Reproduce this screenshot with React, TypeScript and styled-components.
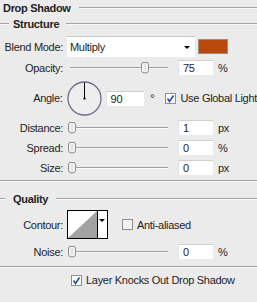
import * as React from 'react'
import styled, { createGlobalStyle } from 'styled-components'

const GlobalStyle = createGlobalStyle`
  html, body {
    margin: 0;
    padding: 0;
    background: #ebebeb;
  }
`

const Panel = styled.div`
  width: 257px;
  height: 302px;
  background: #ebebeb;
  font-family: 'Liberation Sans', Arial, sans-serif;
  font-size: 11px;
  letter-spacing: -0.3px;
  color: #1e1e1e;
  display: flex;
  flex-direction: column;
  overflow: hidden;
`

const HeaderRow = styled.div<{ $top?: number }>`
  display: flex;
  align-items: center;
  height: 16px;
  margin-top: ${p => p.$top || 0}px;
`

const Rule = styled.div<{ $w?: number; $gap?: number }>`
  height: 1px;
  background: #a3a3a3;
  border-bottom: 1px solid #f8f8f8;
  margin-left: ${p => p.$gap || 0}px;
  ${p => (p.$w ? `width: ${p.$w}px;` : 'flex: 1;')}
`

const Heading = styled.div<{ $left: number }>`
  font-weight: bold;
  margin-left: ${p => p.$left}px;
  white-space: nowrap;
`

const Separator = styled.div<{ $top: number }>`
  height: 1px;
  background: #a3a3a3;
  border-bottom: 1px solid #f8f8f8;
  margin-top: ${p => p.$top}px;
`

const Row = styled.div<{ $top: number; $h: number }>`
  display: flex;
  align-items: center;
  margin-top: ${p => p.$top}px;
  height: ${p => p.$h}px;
`

const Label = styled.div`
  width: 63px;
  text-align: right;
  white-space: nowrap;
`

const Select = styled.div`
  margin-left: 4px;
  width: 128px;
  height: 21px;
  box-sizing: border-box;
  background: #fff;
  border-top: 1px solid #c8c8c8;
  display: flex;
  align-items: center;
  padding-left: 3px;
  position: relative;
`

const Caret = styled.div<{ $right: number }>`
  position: absolute;
  right: ${p => p.$right}px;
  top: 50%;
  margin-top: -1px;
  width: 0;
  height: 0;
  border-left: 3px solid transparent;
  border-right: 3px solid transparent;
  border-top: 3px solid #000;
`

const Swatch = styled.div`
  margin-left: 3px;
  width: 30px;
  height: 15px;
  box-sizing: border-box;
  background: #b6490b;
  border: 1px solid #9a8d84;
`

const Track = styled.div`
  margin-left: 4px;
  width: 104px;
  height: 15px;
  position: relative;
  &::before {
    content: '';
    position: absolute;
    left: 3px;
    right: 3px;
    top: 7px;
    height: 1px;
    background: #a0a0a0;
    border-bottom: 1px solid #fafafa;
  }
`

const Thumb = styled.svg`
  position: absolute;
  top: 1px;
`

const Field = styled.div<{ $w?: number; $left?: number }>`
  margin-left: ${p => (p.$left === undefined ? 7 : p.$left)}px;
  width: ${p => p.$w || 35}px;
  height: 15px;
  box-sizing: border-box;
  background: #fff;
  border-top: 1px solid #d0d0d0;
  border-left: 1px solid #e2e2e2;
  padding-left: 4px;
  display: flex;
  align-items: center;
`

const Unit = styled.div<{ $left?: number }>`
  margin-left: ${p => p.$left || 5}px;
`

const Dial = styled.svg`
  margin-left: 4px;
  flex: none;
`

const Check = styled.svg<{ $left: number }>`
  margin-left: ${p => p.$left}px;
  flex: none;
`

const CheckText = styled.div`
  margin-left: 4px;
  white-space: nowrap;
`

const ContourBox = styled.div`
  margin-left: 4px;
  width: 41px;
  height: 29px;
  box-sizing: border-box;
  border: 1px solid #000;
  display: flex;
  background: #fff;
`

const ContourPreview = styled.svg`
  display: block;
  flex: none;
`

const ContourDrop = styled.div`
  flex: 1;
  border-left: 1px solid #000;
  position: relative;
`

const SliderThumb = ({ pos }: { pos: number }) => (
  <Thumb width="8" height="13" viewBox="0 0 8 13" style={{ left: pos }}>
    <path
      d="M2 1.5 H6 Q7.5 1.5 7.5 4 V9.5 Q7.5 12 4 12 Q0.5 12 0.5 9.5 V4 Q0.5 1.5 2 1.5 Z"
      fill="#f3f3f3"
      stroke="#8c8c8c"
    />
    <line x1="4" y1="3" x2="4" y2="10" stroke="#d2d2d2" />
  </Thumb>
)

const Checkbox = ({ left }: { left: number }) => (
  <Check $left={left} width="11" height="11" viewBox="0 0 11 11">
    <rect x="0.5" y="0.5" width="10" height="10" fill="#fbfbfb" stroke="#8e8f8f" />
    <path d="M2.5 5.5 L4.5 8.5 L8.5 2.5" fill="none" stroke="#2d4fa0" strokeWidth="1.6" />
  </Check>
)

const EmptyBox = ({ left }: { left: number }) => (
  <Check $left={left} width="11" height="11" viewBox="0 0 11 11">
    <rect x="0.5" y="0.5" width="10" height="10" fill="#f1f1f1" stroke="#8e8f8f" />
  </Check>
)

interface SliderProps {
  top: number
  label: string
  value: string
  unit: string
  pos: number
}

const SliderRow = ({ top, label, value, unit, pos }: SliderProps) => (
  <Row $top={top} $h={15}>
    <Label>{label}</Label>
    <Track>
      <SliderThumb pos={pos} />
    </Track>
    <Field>{value}</Field>
    <Unit>{unit}</Unit>
  </Row>
)

export default function App() {
  return (
    <Panel>
      <GlobalStyle />
      <HeaderRow>
        <Heading $left={3}>Drop Shadow</Heading>
        <Rule $gap={8} />
      </HeaderRow>
      <HeaderRow>
        <Rule $w={9} />
        <Heading $left={4}>Structure</Heading>
        <Rule $gap={7} />
      </HeaderRow>

      <Row $top={4} $h={21}>
        <Label>Blend Mode:</Label>
        <Select>
          Multiply
          <Caret $right={5} />
        </Select>
        <Swatch />
      </Row>

      <SliderRow top={3} label="Opacity:" value="75" unit="%" pos={74} />

      <Row $top={6} $h={34}>
        <Label>Angle:</Label>
        <Dial width="35" height="35" viewBox="0 0 35 35">
          <circle cx="17.5" cy="17.5" r="16.5" fill="#eeeeee" stroke="#6a7189" strokeWidth="1.3" />
          <line x1="17.5" y1="1.5" x2="17.5" y2="17.5" stroke="#000" strokeWidth="1" />
          <rect x="16.5" y="16.5" width="2" height="2" fill="#000" />
        </Dial>
        <Field $w={39} $left={4}>90</Field>
        <Unit $left={6}>°</Unit>
        <Checkbox left={11} />
        <CheckText>Use Global Light</CheckText>
      </Row>

      <SliderRow top={5} label="Distance:" value="1" unit="px" pos={1} />
      <SliderRow top={5} label="Spread:" value="0" unit="%" pos={1} />
      <SliderRow top={5} label="Size:" value="0" unit="px" pos={1} />

      <Separator $top={5} />

      <HeaderRow $top={9}>
        <Rule $w={5} />
        <Heading $left={8}>Quality</Heading>
        <Rule $gap={8} />
      </HeaderRow>

      <Row $top={3} $h={29}>
        <Label>Contour:</Label>
        <ContourBox>
          <ContourPreview width="29" height="27" viewBox="0 0 29 27">
            <polygon points="0,27 29,0 29,27" fill="#a3a3a3" />
          </ContourPreview>
          <ContourDrop>
            <Caret $right={2} style={{ marginTop: -6 }} />
          </ContourDrop>
        </ContourBox>
        <EmptyBox left={14} />
        <CheckText>Anti-aliased</CheckText>
      </Row>

      <SliderRow top={5} label="Noise:" value="0" unit="%" pos={1} />

      <Separator $top={7} />

      <Row $top={6} $h={12}>
        <Checkbox left={71} />
        <CheckText>Layer Knocks Out Drop Shadow</CheckText>
      </Row>
    </Panel>
  )
}
